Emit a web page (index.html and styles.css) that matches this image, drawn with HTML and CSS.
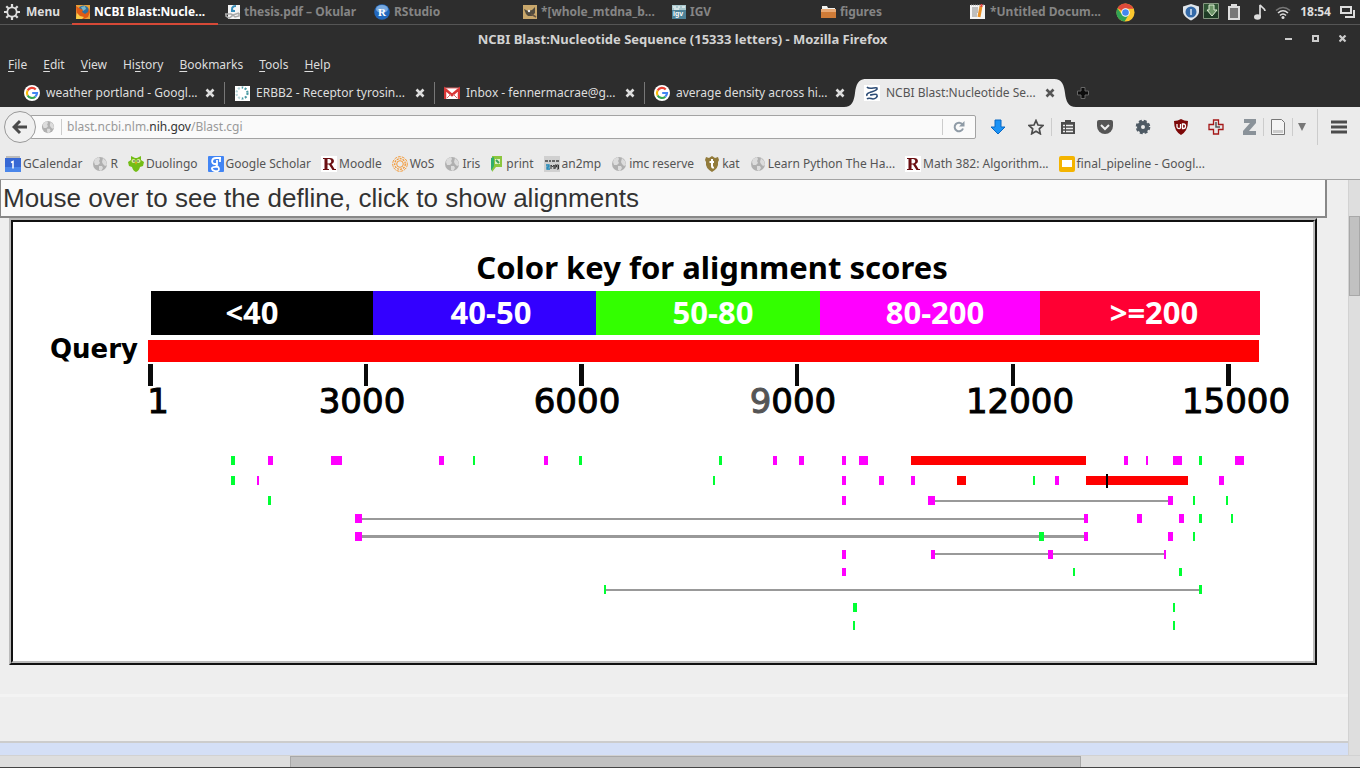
FILE: index.html
```html
<!DOCTYPE html>
<html lang="en">
<head>
<meta charset="utf-8">
<title>NCBI Blast:Nucleotide Sequence (15333 letters)</title>
<link rel="stylesheet" href="styles.css">
</head>
<body>
<svg class="defs" aria-hidden="true">
  <symbol id="globe" viewBox="0 0 16 16"><circle cx="8" cy="8" r="7" fill="#b0b0b0"/><path d="M3 3l4-2 1 2-1 2 1 2-2 2-3 0-1-3zM11 2l3 3 1 4-2 1-2-2-1-2zM7 10l3 0 1 2-2 3-2-1z" fill="#dcdcdc"/></symbol>
  <symbol id="google" viewBox="0 0 16 16"><circle cx="8" cy="8" r="8" fill="#fff"/><g fill="none" stroke-width="2.2"><path d="M3.600 5.500A5 5 0 0 1 11.700 4.500" stroke="#ea4335"/><path d="M3.600 10.500A5 5 0 0 1 3.600 5.500" stroke="#fbbc05"/><path d="M11.300 11.700A5 5 0 0 1 3.600 10.500" stroke="#34a853"/><path d="M8.200 8H13A5 5 0 0 1 11.300 11.700" stroke="#4285f4"/></g></symbol>
  <symbol id="close" viewBox="0 0 10 10"><path d="M1.500 1.500L8.500 8.500M8.500 1.500L1.500 8.500" stroke="currentColor" stroke-width="2.600"/></symbol>
  <symbol id="reed" viewBox="0 0 16 16"><path d="M0 0h16v16H0z" fill="#fff"/><path fill-rule="evenodd" d="M2 2h7c5 0 5 5 1.500 6l3 5H15v1h-3.500L8 8.500H6.500V13H8v1H2v-1h1.500V3H2zM6.500 3v4.500H8c3 0 3-4.500 0-4.500z" fill="#6b0f12"/></symbol>
</svg>

<header class="panel">
  <button class="menu-button"><svg width="16" height="16" viewBox="0 0 16 16"><circle cx="8" cy="8" r="4.700" fill="none" stroke="#ddd" stroke-width="1.800"/><path d="M8 0v3M8 13v3M0 8h3M13 8h3M2.300 2.300l2 2M11.700 11.700l2 2M2.300 13.700l2-2M11.700 4.300l2-2" stroke="#ddd" stroke-width="2.200"/></svg>Menu</button>
  <nav class="tasks">
    <button class="task active"><svg width="14" height="14" viewBox="0 0 14 14"><path d="M0 0h14v14H0z" fill="#e8a13a"/><circle cx="7.500" cy="6" r="5.500" fill="#2f6f9f"/><path d="M5 2l4-1 1 3-3 2z" fill="#79b7c9"/><path d="M0 1l3 2 2 1 2 1-1 2 3 2 3-2 1-4 1 4-2 5-4 2H4L1 11z" fill="#df5b16"/><path d="M1 8l3 3 4 1-2 2H0z" fill="#f8cd49"/></svg><span>NCBI Blast:Nucle...</span></button>
    <button class="task"><svg width="15" height="15" viewBox="0 0 15 15"><path d="M3 0h12v14H3z" fill="#f4f4f4"/><path d="M11 1C7 1 6 4 8 6M6 6h4" stroke="#368dba" stroke-width="2" fill="none"/><path d="M0 9h6l2 1 6-2M1 9v2l3 2 3-2V9M8 10l2 2 4-1V8" stroke="#aaa" stroke-width="1.500" fill="none"/></svg><span>thesis.pdf – Okular</span></button>
    <button class="task"><svg width="16" height="16" viewBox="0 0 16 16"><circle cx="8" cy="8" r="7.800" fill="#2268bd"/><ellipse cx="8" cy="5" rx="6" ry="4" fill="#78a9df"/><text x="4" y="12" class="glyph serif" fill="#fff">R</text></svg><span>RStudio</span></button>
    <button class="task"><svg width="14" height="14" viewBox="0 0 14 14"><path d="M0 0h14v14H0z" fill="#c9a76b"/><path d="M1 4l4 2 4-1 3-3v6l-3 3H5L3 9z" fill="#514b3f"/><circle cx="6" cy="6" r="1.200" fill="#eee"/><path d="M8 9l5 3" stroke="#654" stroke-width="1.500"/></svg><span>*[whole_mtdna_b...</span></button>
    <button class="task"><svg width="14" height="14" viewBox="0 0 14 14"><path d="M0 0h14v14H0z" fill="#4e8298"/><path d="M0 0h14v5H0z" fill="#a9c8ce"/><path d="M1 2h3M6 2h2M10 2h3M2 4h5" stroke="#fff"/><text x="1" y="11" class="glyph tiny" fill="#fff">igv</text></svg><span>IGV</span></button>
    <button class="task"><svg width="15" height="14" viewBox="0 0 15 14"><path d="M1 1h5l1 2h7v4H1z" fill="#f2f2ef"/><path d="M0 4h15v9H0z" fill="#cf7b37"/><path d="M0 4h15v3H0z" fill="#e7a874"/></svg><span>figures</span></button>
    <button class="task"><svg width="16" height="16" viewBox="0 0 16 16"><path d="M0 1h15v14H0z" fill="#f4f4f4"/><path d="M2 4h6M2 6h6M2 8h6M2 10h5M2 12h5" stroke="#888"/><path d="M1 1h13" stroke="#999" stroke-dasharray="1 1"/><path d="M11 2l-2 11" stroke="#e99127" stroke-width="3"/><path d="M11.500 0v3" stroke="#d44" stroke-width="2"/></svg><span>*Untitled Docum...</span></button>
    <button class="task chrome" aria-label="Chrome"><svg width="19" height="19" viewBox="0 0 20 20"><circle cx="10" cy="10" r="9.500" fill="#fbc72e"/><path d="M10 10L1.500 5.500A9.500 9.500 0 0 1 18.500 6H10z" fill="#df4a3b"/><path d="M1.500 5.500A9.500 9.500 0 0 0 9 19.500L13.500 12 10 10 5.500 11z" fill="#31a354"/><circle cx="10" cy="10" r="4.500" fill="#fff"/><circle cx="10" cy="10" r="3.500" fill="#4487ee"/></svg></button>
  </nav>
  <div class="tray">
    <svg width="16" height="17" viewBox="0 0 16 17"><path d="M8 0l8 2.500v5c0 4-4 7-8 9-4-2-8-5-8-9v-5z" fill="#dfe5ea"/><circle cx="8" cy="8" r="5.500" fill="#346aa8"/><path d="M8 5v6" stroke="#d8e6f5" stroke-width="1.500"/></svg>
    <svg width="16" height="18" viewBox="0 0 16 18"><path d="M.500 .500h15v15H.500z" fill="#2f5434" stroke="#84977f"/><path d="M1 9h14v6H1z" fill="#1f3d26"/><path d="M6 2h5v5h3l-5 6-5-6h2z" fill="#6d9668" stroke="#dcebd2"/></svg>
    <svg width="12" height="16" viewBox="0 0 12 16"><path d="M3 0h6v2h3v14H0V2h3z" fill="#ddd"/><path d="M2 4h8v10H2z" fill="#777"/></svg>
    <svg width="12" height="16" viewBox="0 0 12 16"><ellipse cx="3.500" cy="13" rx="3.500" ry="2.800" fill="#ddd"/><path d="M6 13V1c1 2 5 3 5 6" stroke="#ddd" stroke-width="1.700" fill="none"/></svg>
    <svg width="16" height="13" viewBox="0 0 16 13" fill="none" stroke-width="1.600"><path d="M1 4.500Q8-1.500 15 4.500" stroke="#777"/><path d="M3 7Q8 2.500 13 7" stroke="#ddd"/><path d="M5 9.500Q8 6.500 11 9.500" stroke="#ddd"/><circle cx="8" cy="11.500" r="1.500" fill="#ddd"/></svg>
    <time>18:54</time>
    <svg width="16" height="12" viewBox="0 0 16 12"><path d="M1 1h10v6H1zM14 4v7H5" fill="none" stroke="#ddd" stroke-width="2"/></svg>
  </div>
</header>

<div class="titlebar">
  <h1>NCBI Blast:Nucleotide Sequence (15333 letters) - Mozilla Firefox</h1>
  <div class="window-buttons">
    <button aria-label="Minimize"><svg width="8" height="8" viewBox="0 0 8 8"><path d="M0 4h7" stroke="#ccc" stroke-width="2"/></svg></button>
    <button aria-label="Maximize"><svg width="8" height="8" viewBox="0 0 8 8"><path d="M1 1h5v5H1z" fill="none" stroke="#ccc" stroke-width="2"/></svg></button>
    <button aria-label="Close"><svg width="8" height="8" viewBox="0 0 8 8"><path d="M.500 .500l6 6M6.500 .500l-6 6" stroke="#ccc" stroke-width="2.200"/></svg></button>
  </div>
</div>

<nav class="menubar">
  <button><u>F</u>ile</button><button><u>E</u>dit</button><button><u>V</u>iew</button><button>Hi<u>s</u>tory</button><button><u>B</u>ookmarks</button><button><u>T</u>ools</button><button><u>H</u>elp</button>
</nav>

<div class="tabs">
  <div class="tab"><svg width="16" height="16"><use href="#google"/></svg><span>weather portland - Googl...</span><button aria-label="Close tab"><svg width="10" height="10"><use href="#close"/></svg></button></div>
  <div class="tab"><svg width="16" height="16" viewBox="0 0 16 16"><path d="M1 1h15v15H1z" fill="#fff"/><circle cx="8" cy="8" r="5.500" fill="none" stroke="#4b9aa4" stroke-width="2.200" stroke-dasharray="2 1.500"/><path d="M1 1h7v13H1z" fill="#fff" opacity=".6"/></svg><span>ERBB2 - Receptor tyrosin...</span><button aria-label="Close tab"><svg width="10" height="10"><use href="#close"/></svg></button></div>
  <div class="tab"><svg width="16" height="16" viewBox="0 0 16 16"><path d="M0 3h16v11H0z" fill="#fff"/><path d="M1 14V4l7 6 7-6v10" fill="none" stroke="#d93636" stroke-width="2.500"/><path d="M1 3h14M3 13l4-4M13 13L9 9" stroke="#d66"/></svg><span>Inbox - fennermacrae@g...</span><button aria-label="Close tab"><svg width="10" height="10"><use href="#close"/></svg></button></div>
  <div class="tab last"><svg width="16" height="16"><use href="#google"/></svg><span>average density across hi...</span><button aria-label="Close tab"><svg width="10" height="10"><use href="#close"/></svg></button></div>
  <div class="tab current">
    <svg class="curve left" width="22" height="28" viewBox="0 0 22 28"><path d="M0 28C8 28 10 22 11 14S14 0 22 0V28z" fill="#ebebeb"/></svg>
    <svg class="curve right" width="22" height="28" viewBox="0 0 22 28"><path d="M22 28C14 28 12 22 11 14S8 0 0 0V28z" fill="#ebebeb"/></svg>
    <svg width="16" height="16" viewBox="0 0 16 16"><path d="M0 0h16v16H0z" fill="#fff"/><path d="M3 2c2 3 8 0 10 1 1 2-3 3-6 4s-5 2-4 4" fill="none" stroke="#2e4d76" stroke-width="1.600"/><path d="M6 10c3 0 6-2 7 0s-2 4-4 4-4-2-6 0" fill="none" stroke="#2e4d76" stroke-width="1.600"/></svg><span>NCBI Blast:Nucleotide Se...</span><button aria-label="Close tab"><svg width="10" height="10"><use href="#close"/></svg></button></div>
  <button class="new-tab" aria-label="New tab"><svg width="12" height="12" viewBox="0 0 12 12"><path d="M4 .500h4V4h3.500v4H8v3.500H4V8H.500V4H4z" fill="#0c0c0c" stroke="#666"/></svg></button>
</div>

<div class="navbar">
  <button class="back" aria-label="Back"><svg width="16" height="16" viewBox="0 0 16 16"><path d="M8 2L2 8l6 6M3 8h12" fill="none" stroke="#4a4a4a" stroke-width="3"/></svg></button>
  <div class="url">
    <svg width="14" height="14"><use href="#globe"/></svg>
    <a href="#">blast.ncbi.nlm.<b>nih.gov</b>/Blast.cgi</a>
    <button class="reload" aria-label="Reload"><svg width="12" height="12" viewBox="0 0 12 12"><path d="M9.500 3.500A4.300 4.300 0 1 0 10 7.500" fill="none" stroke="#8f9ba6" stroke-width="2"/><path d="M11.500 0v5.500H6z" fill="#8f9ba6"/></svg></button>
  </div>
  <div class="tools">
    <button class="tool" aria-label="Downloads"><svg width="16" height="16" viewBox="0 0 16 16"><path d="M5 1h6v7h4l-7 7-7-7h4z" fill="#1c93f5" stroke="#0968c4"/></svg></button>
    <button class="tool star" aria-label="Bookmark"><svg width="16" height="16" viewBox="0 0 16 16"><path d="M8 1.500l2 4.500 5 .500-3.700 3.300 1 5L8 12.300l-4.300 2.500 1-5L1 6.500 6 6z" fill="none" stroke="#4c4c4c" stroke-width="1.700"/></svg></button>
    <button class="tool list" aria-label="Bookmarks list"><svg width="16" height="16" viewBox="0 0 16 16"><path d="M5 3V1h6v2h4v12H1V3z" fill="#4c4c4c"/><path d="M3 6.500h2M6 6.500h7M3 9.500h2M6 9.500h7M3 12.500h2M6 12.500h7" stroke="#eee" stroke-width="1.600"/></svg></button>
    <button class="tool" aria-label="Pocket"><svg width="16" height="16" viewBox="0 0 16 16"><path d="M0 3q0-2 2-2h12q2 0 2 2v4a8 8 0 0 1-16 0z" fill="#555"/><path d="M4 6l4 4 4-4" fill="none" stroke="#eee" stroke-width="2"/></svg></button>
    <button class="tool" aria-label="Add-on settings"><svg width="16" height="16" viewBox="0 0 16 16"><circle cx="8" cy="8" r="4" fill="none" stroke="#4e5a64" stroke-width="4"/><circle cx="8" cy="8" r="6.300" fill="none" stroke="#4e5a64" stroke-width="2" stroke-dasharray="3 1.950"/></svg></button>
    <button class="tool" aria-label="uBlock"><svg width="16" height="16" viewBox="0 0 16 16"><path d="M8 0q3 2 7 2 0 10-7 14Q1 12 1 2q4 0 7-2z" fill="#7d0808"/><path d="M4 5v3q0 1.500 2 1.500T7.500 8V5M9.500 5v4.500h1q2 0 2-2.300T10.500 5z" fill="none" stroke="#fff" stroke-width="1.300"/></svg></button>
    <button class="tool narrow" aria-label="Clock"><svg width="16" height="16" viewBox="0 0 16 16"><path d="M5.500 1h5v4.500H15v5h-4.500V15h-5v-4.500H1v-5h4.500z" fill="#e7e7e7" stroke="#a51818" stroke-width="1.300"/><path d="M8 3v5h4" fill="none" stroke="#555" stroke-width="1.500"/></svg></button>
    <button class="tool zotero" aria-label="Zotero"><svg width="14" height="16" viewBox="0 0 14 16"><path d="M1 0h12v4L6 12h7v4H0v-4l7-8H1z" fill="#8a9299"/></svg></button>
    <button class="tool page" aria-label="Save page"><svg width="14" height="16" viewBox="0 0 14 16"><path d="M.500 .500h10l3 3v12H.500z" fill="#f4f4f4" stroke="#777"/><path d="M2 11h10v3H2z" fill="#ccc"/></svg></button>
    <button class="tool drop" aria-label="More"><svg width="8" height="8" viewBox="0 0 8 8"><path d="M0 0h8L4 8z" fill="#777"/></svg></button>
    <button class="tool burger" aria-label="Open menu"><svg width="16" height="14" viewBox="0 0 16 14"><path d="M0 2h16M0 7h16M0 12h16" stroke="#4c4c4c" stroke-width="3"/></svg></button>
  </div>
</div>

<nav class="bookmarks">
  <a href="#"><svg width="16" height="16" viewBox="0 0 16 16"><path d="M1 0h14v3H1z" fill="#bbb"/><path d="M0 2h16v14H0z" fill="#3768d4"/><path d="M0 11h16v5H0z" fill="#4a86ea"/><path d="M6 6.500l2-1v7" fill="none" stroke="#fff" stroke-width="1.500"/></svg>GCalendar</a>
  <a href="#"><svg width="16" height="16"><use href="#globe"/></svg>R</a>
  <a href="#"><svg width="16" height="16" viewBox="0 0 16 16"><path d="M3 0l4 2h2l4-2v4l3 2-1 4-3 1q-1 4-4 5-3-1-4-5l-3-1-1-4 3-2z" fill="#73bd16"/><circle cx="5.500" cy="5" r="2" fill="#d9ef9c"/><circle cx="10.500" cy="5" r="2" fill="#d9ef9c"/><path d="M6 4v2M10 4v2" stroke="#555"/><path d="M7 6h2l-1 3z" fill="#f39b19"/></svg>Duolingo</a>
  <a href="#"><svg width="16" height="16" viewBox="0 0 16 16"><rect width="16" height="16" rx="1" fill="#4285f4"/><path d="M13 2H8C3 2 3 8 7 8h2V4M9 8c-2 2 2 2 2 5 0 4-8 2-7-1 1-2 5-1 6-1M12 2v4" fill="none" stroke="#fff" stroke-width="1.800"/></svg>Google Scholar</a>
  <a href="#"><svg width="16" height="16"><use href="#reed"/></svg>Moodle</a>
  <a href="#"><svg width="16" height="16" viewBox="0 0 16 16" fill="none" stroke="#f39835"><circle cx="8" cy="8" r="7.300" stroke-dasharray="3 1"/><circle cx="8" cy="8" r="5.300" stroke-width="1.300" stroke-dasharray="2 1"/><circle cx="8" cy="8" r="3.300"/></svg>WoS</a>
  <a href="#"><svg width="16" height="16"><use href="#globe"/></svg>Iris</a>
  <a href="#"><svg width="14" height="16" viewBox="0 0 14 16"><path d="M2 0h10v11H6l-4 5z" fill="#8bc63e"/><path d="M1 2l3-1v9l-3 5z" fill="#2fae6b"/><path d="M5 3h5v5H5z" fill="#dff1c5"/><path d="M6 4l3 3" stroke="#3ca35c" stroke-width="2"/></svg>print</a>
  <a href="#"><svg width="16" height="16" viewBox="0 0 16 16"><path d="M0 0h16v16H0z" fill="#d0d0d0"/><path d="M1 5h3M5 5h2M8 5h3M12 5h3" stroke="#666" stroke-width="2"/><path d="M2 9h3v2H3v2h3" fill="none" stroke="#1c87b8" stroke-width="1.300"/><path d="M7 13V9l1.500 2L10 9v4M11 13V9h1.500v2H11M13 9h1.500v4H13M13 11h1" fill="none" stroke="#333"/></svg>an2mp</a>
  <a href="#"><svg width="16" height="16"><use href="#globe"/></svg>imc reserve</a>
  <a href="#"><svg width="16" height="16" viewBox="0 0 16 16"><path d="M2 1l3 1 3-2 3 2 3-1 1 3-1 2q1 6-6 10Q1 12 2 6L1 4z" fill="#927b3b"/><path d="M8 3v7q0 2 2 1.500M5.500 6H10" fill="none" stroke="#fff" stroke-width="2"/></svg>kat</a>
  <a href="#"><svg width="16" height="16"><use href="#globe"/></svg>Learn Python The Ha...</a>
  <a href="#"><svg width="16" height="16"><use href="#reed"/></svg>Math 382: Algorithm...</a>
  <a href="#"><svg width="16" height="16" viewBox="0 0 16 16"><rect width="16" height="16" rx="2" fill="#f4b400"/><path d="M3 4h10v7H3z" fill="#fff"/></svg>final_pipeline - Googl...</a>
</nav>

<div class="viewport">
  <main class="page">
    <input class="defline" type="text" aria-label="Defline" value="Mouse over to see the defline, click to show alignments">
    <figure class="chart">
      <svg viewBox="13 222 1300 439" role="img" aria-label="Color key for alignment scores" shape-rendering="crispEdges">
        <text class="chart-title" x="712" y="279">Color key for alignment scores</text>
        <path fill="#000" d="M151 291h222v44h-222z"/>
        <path fill="#30f" d="M373 291h223v44h-223z"/>
        <path fill="#3f0" d="M596 291h224v44h-224z"/>
        <path fill="#f0f" d="M820 291h220v44h-220z"/>
        <path fill="#f03" d="M1040 291h220v44h-220z"/>
        <g class="key"><text x="252" y="324">&lt;40</text><text x="491" y="324">40-50</text><text x="713" y="324">50-80</text><text x="935" y="324">80-200</text><text x="1154" y="324">&gt;=200</text></g>
        <text class="query" x="138" y="358">Query</text>
        <path fill="red" d="M148 340h1111v22H148z"/>
        <path fill="#0a0a0a" d="M148 364h5v22h-5zM364 364h4v22h-4zM579 364h5v22h-5zM795 364h4v22h-4zM1011 364h4v22h-4zM1226 364h5v22h-5z"/>
        <g class="axis"><text x="158" y="413">1</text><text x="362" y="413">3000</text><text x="577" y="413">6000</text><text x="793" y="413"><tspan class="faded">9</tspan>000</text><text x="1020" y="413">12000</text><text x="1236" y="413">15000</text></g>
        <path fill="#999" d="M935 500h233v2H935zM362 518h722v2H362zM362 535h722v3H362zM935 553h229v2H935zM606 589h593v2H606z"/>
        <path fill="red" d="M911 456h175v9H911zM957 476h9v9h-9zM1086 476h102v9h-102z"/>
        <path fill="#f0f" d="M268 456h5v9h-5zM331 456h11v9h-11zM439 456h5v9h-5zM544 456h4v9h-4zM773 456h4v9h-4zM799 456h5v9h-5zM842 456h4v9h-4zM859 456h9v9h-9zM1124 456h4v9h-4zM1146 456h2v9h-2zM1173 456h9v9h-9zM1235 456h9v9h-9z
          M257 476h2v9h-2zM842 476h4v9h-4zM879 476h5v9h-5zM911 476h4v9h-4zM1055 476h4v9h-4zM1219 476h5v9h-5z
          M842 496h4v9h-4zM928 496h7v9h-7zM1168 496h5v9h-5z
          M355 514h7v9h-7zM1084 514h4v9h-4zM1137 514h5v9h-5zM1179 514h5v9h-5z
          M355 532h7v9h-7zM1084 532h4v9h-4zM1168 532h5v9h-5z
          M842 550h4v9h-4zM931 550h4v9h-4zM1048 550h5v9h-5zM1164 550h2v9h-2z
          M842 568h4v8h-4z"/>
        <path fill="#0f3" d="M231 456h4v9h-4zM473 456h2v9h-2zM579 456h3v9h-3zM719 456h3v9h-3zM1199 456h3v9h-3z
          M231 476h4v9h-4zM713 476h2v9h-2zM1033 476h2v9h-2z
          M268 496h3v9h-3zM1193 496h2v9h-2zM1226 496h2v9h-2z
          M1199 514h3v9h-3zM1231 514h2v9h-2z
          M1039 532h5v9h-5zM1193 532h2v9h-2z
          M1073 568h2v8h-2zM1179 568h3v8h-3z
          M604 585h2v9h-2zM1199 585h3v9h-3z
          M853 603h4v9h-4zM1173 603h2v9h-2zM853 621h2v9h-2zM1173 621h2v9h-2z"/>
        <path fill="#000" d="M1106 474h2v14h-2z"/>
      </svg>
    </figure>
    <hr class="rule">
    <div class="band"></div>
  </main>
  <div class="vscroll"><div class="thumb"></div></div>
  <div class="hscroll"><div class="thumb"></div></div>
</div>
</body>
</html>
```
FILE: styles.css
```css
* { box-sizing: border-box; }
body {
  margin: 0;
  height: 100vh;
  display: flex;
  flex-direction: column;
  overflow: hidden;
  background: #2d2d2d;
  color: #ddd;
  font: 12px/16px "Noto Sans", sans-serif;
}
button { padding: 0; border: 0; background: none; color: inherit; font: inherit; }
svg { display: block; flex: none; }
a { color: inherit; text-decoration: none; }
.defs { position: absolute; width: 0; height: 0; }
.glyph { font: bold 11px "Liberation Serif", serif; }
.glyph.tiny { font: bold 7px "Liberation Sans", sans-serif; }

.panel {
  display: flex;
  height: 25px;
  flex: none;
  border-bottom: 1px solid #555;
  font-weight: bold;
}
.menu-button { display: flex; align-items: center; gap: 6px; width: 72px; padding-left: 4px; }
.tasks { display: flex; gap: 3px; flex: 1; min-width: 0; }
.task {
  display: flex;
  align-items: center;
  gap: 4px;
  width: 146px;
  height: 25px;
  padding: 1px 0 0 4px;
  border-bottom: 2px solid transparent;
  color: #858585;
  white-space: nowrap;
}
.task.active { color: #fff; border-color: #d64937; }
.task.chrome { width: 24px; padding-left: 1px; }
.tray { display: flex; align-items: center; gap: 9px; padding-right: 4px; }
.tray svg:nth-child(1) { margin-right: -5px; }
.tray svg:nth-child(3) { margin-right: 5px; }

.titlebar { display: grid; height: 28px; flex: none; align-items: center; padding: 0 13px; }
.titlebar h1 { grid-area: 1 / 1; margin: 0; padding-left: 5px; text-align: center; font-size: 13px; color: #d2d2d2; }
.window-buttons { grid-area: 1 / 1; display: flex; justify-content: flex-end; gap: 19px; }

.menubar { display: flex; height: 24px; flex: none; align-items: center; gap: 16px; padding-left: 8px; }
.menubar u { text-underline-offset: 2px; }

.tabs { display: flex; height: 30px; flex: none; padding: 2px 0 0 14px; }
.tab {
  position: relative;
  display: flex;
  align-items: center;
  width: 210px;
  padding: 0 9px 0 10px;
  gap: 6px;
  white-space: nowrap;
}
.tab span { flex: 1; }
.tab::after {
  content: "";
  position: absolute;
  right: -1px;
  top: 3px;
  height: 22px;
  border-right: 1px solid #777;
}
.tab.last::after, .tab.current::after { display: none; }
.tab.current { background: #ebebeb; color: #555; width: 191px; margin: 0 9px 0 10px; padding: 0; }
.tab.current .curve { position: absolute; top: 0; }
.tab.current .left { right: 100%; margin-right: -2px; }
.tab.current .right { left: 100%; margin-left: -1px; }
.tab.current > * { z-index: 1; }
.tab.current > .curve { z-index: 0; }
.new-tab { padding-left: 13px; }

.navbar { display: flex; align-items: center; height: 40px; flex: none; padding-left: 4px; background: #ebebeb; color: #4c4c4c; }
.back {
  display: grid;
  place-items: center;
  width: 32px;
  height: 32px;
  z-index: 1;
  margin-right: -6px;
  border: 1px solid #999;
  border-radius: 50%;
  background: #f0f0f0;
}
.url {
  display: flex;
  align-items: center;
  flex: 1;
  height: 24px;
  padding-left: 10px;
  border: 1px solid #a3a3a3;
  border-radius: 2px;
  background: #fafafa;
  color: #999;
}
.url a { flex: 1; margin-left: 6px; padding-left: 5px; border-left: 1px solid #ccc; }
.url b { font-weight: normal; color: #333; }
.reload { display: grid; place-items: center; width: 33px; height: 16px; border-left: 1px solid #ccc; }
.tools { display: flex; align-items: center; padding-left: 3px; }
.tool { display: grid; place-items: center; width: 38px; height: 18px; }
.star { width: 34px; padding-left: 4px; }
.list { width: 35px; padding-right: 3px; border-left: 1px solid #ccc; }
.narrow { width: 32px; }
.zotero { width: 31px; padding-left: 5px; }
.page.tool { width: 29px; border-left: 1px solid #ccc; }
.drop { width: 18px; border-left: 1px solid #ccc; }
.burger { width: 43px; height: 36px; margin-left: 7px; border-left: 1px solid #ccc; }

.bookmarks {
  display: flex;
  align-items: center;
  gap: 10px;
  height: 33px;
  flex: none;
  padding: 1px 0 0 5px;
  border-bottom: 1px solid #a3a3a3;
  background: #ebebeb;
  color: #555;
  white-space: nowrap;
}
.bookmarks a { display: flex; align-items: center; gap: 2px; }

.viewport {
  display: grid;
  grid-template: minmax(0, 1fr) 12px / minmax(0, 1fr) 12px;
  flex: 1;
  min-height: 0;
  border-bottom: 1px solid #444;
}
main.page { display: flex; flex-direction: column; overflow: hidden; background: #eee; }
.defline {
  display: block;
  flex: none;
  height: 38px;
  margin: 0 21px 0 0;
  padding: 1px 3px 0 2px;
  border: solid #888;
  border-width: 0 2px 2px 1px;
  background: #fafafa;
  color: #333;
  font: 26px/34px "Liberation Sans", sans-serif;
}
.chart {
  margin: 0 31px 29px 9px;
  flex: none;
  border: 2px solid;
  border-color: #bbb #111 #111 #bbb;
}
.chart svg {
  width: 100%;
  border: 2px solid;
  border-color: #111 #bbb #bbb #111;
  background: #fff;
}
.chart text { text-anchor: middle; }
.chart-title { font: bold 31px "Noto Sans", sans-serif; }
.key { font: bold 31px "Noto Sans", sans-serif; fill: #fff; }
.chart .query { font: bold 26px "DejaVu Sans", sans-serif; text-anchor: end; }
.axis { font: 34px "DejaVu Sans", sans-serif; stroke: #000; stroke-width: 1px; }
.axis .faded { fill: #555; stroke: #555; }
.rule { flex: none; width: 100%; height: 3px; margin: 0 0 44px; border: 0; background: #f3f3f3; }
.band { flex: 1; border-top: 2px solid #ccc; background: #d4dff6; }
.vscroll { background: #dedede; border-left: 1px solid #d2d2d2; padding-top: 36px; }
.vscroll .thumb { height: 80px; border: 1px solid #a8a8a8; background: #c1c1c1; }
.hscroll { grid-column: 1 / -1; background: #dedede; border-top: 1px solid #d2d2d2; }
.hscroll .thumb { width: 58.2%; height: 100%; margin-left: 21.3%; border: 1px solid #a8a8a8; border-bottom: 0; background: #c1c1c1; }
```
